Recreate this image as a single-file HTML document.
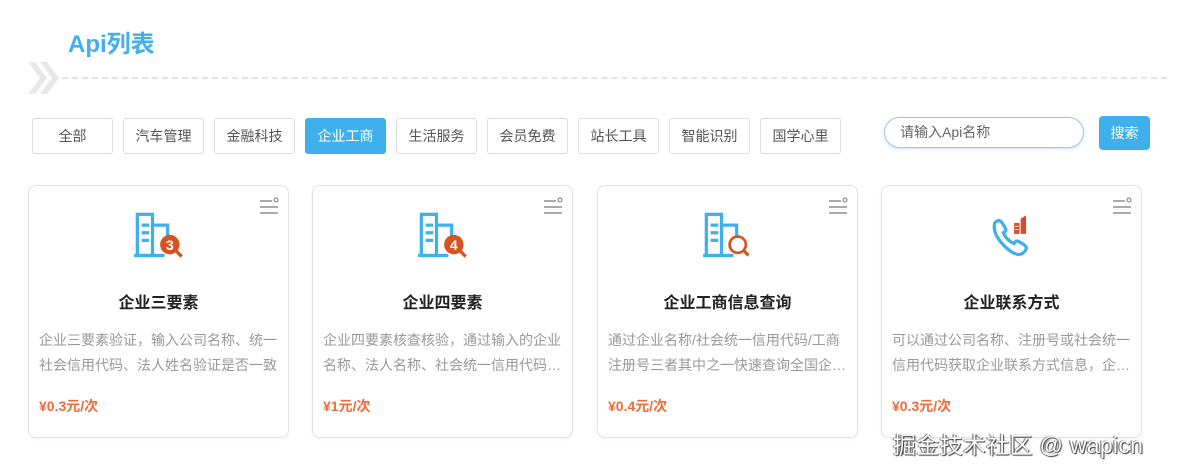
<!DOCTYPE html>
<html><head><meta charset="utf-8"><style>
*{margin:0;padding:0;box-sizing:border-box}
body{width:1180px;height:474px;background:#fff;font-family:"Liberation Sans","Noto Sans CJK SC",sans-serif;position:relative;overflow:hidden}
.title{position:absolute;left:68px;top:24px;font-size:24px;font-weight:bold;color:#3fb0ec}
.dash{position:absolute;left:62px;top:77px;width:1105px;border-top:2px dashed #e4e4e4}
.chev{position:absolute;left:26px;top:60px}
.tab{position:absolute;top:118px;width:81px;height:36px;border:1px solid #ddd;border-radius:3px;font-size:14px;color:#555;text-align:center;line-height:34px}
.tab.on{background:#3fb0ec;border-color:#3fb0ec;color:#fff}
.inp{position:absolute;left:884px;top:117px;width:200px;height:31px;border:1px solid #9cc8e8;border-radius:16px;font-size:14px;color:#666;padding-left:15px;line-height:29px;box-shadow:0 1px 3px rgba(100,160,220,.3)}
.btn{position:absolute;left:1099px;top:116px;width:51px;height:34px;background:#3fb0ec;border-radius:4px;color:#fff;font-size:14px;text-align:center;line-height:34px}
.card{position:absolute;top:185px;width:261px;height:253px;border:1px solid #e3e3e3;border-radius:8px;box-shadow:0 1px 4px rgba(0,0,0,.05)}
.card .ic{position:absolute;left:0;right:0;top:26px;text-align:center}
.card h3{position:absolute;top:103px;left:0;right:0;text-align:center;font-size:16px;color:#222;font-weight:bold}
.card p{position:absolute;top:142px;left:10px;width:242px;font-size:14px;color:#999;line-height:25px;height:50px;overflow:hidden}
.card .pr{position:absolute;top:210px;left:10px;font-size:14px;font-weight:bold;color:#f06a3c}
.menu{position:absolute;right:9px;top:11px}
.wm{position:absolute;left:893px;top:426px;font-size:23px;color:#fff;text-shadow:1px 1px 1px #333,-1px 0 1px #555;letter-spacing:0.3px}
</style></head><body>
<div class="title">Api列表</div>
<svg class="chev" width="36" height="36" viewBox="0 0 36 36"><path d="M2 2 L14 18 L2 34 L9 34 L21 18 L9 2Z M14 2 L26 18 L14 34 L21 34 L33 18 L21 2Z" fill="#e8e8e8"/></svg>
<div class="dash"></div>
<div class="tab" style="left:32px">全部</div>
<div class="tab" style="left:123px">汽车管理</div>
<div class="tab" style="left:214px">金融科技</div>
<div class="tab on" style="left:305px">企业工商</div>
<div class="tab" style="left:396px">生活服务</div>
<div class="tab" style="left:487px">会员免费</div>
<div class="tab" style="left:578px">站长工具</div>
<div class="tab" style="left:669px">智能识别</div>
<div class="tab" style="left:760px">国学心里</div>
<div class="inp">请输入Api名称</div>
<div class="btn">搜索</div>

<div class="card" style="left:28px">
<svg class="menu" width="20" height="18"><path d="M1 4h12M1 10h18M1 16h18" stroke="#777" stroke-width="1.2"/><circle cx="17" cy="3" r="2" fill="none" stroke="#777"/></svg>
<div class="ic"><svg width="52" height="48" viewBox="0 0 48 44"><g fill="none" stroke="#3fb0ec" stroke-width="3"><rect x="4" y="2" width="14" height="38"/><path d="M18 12h14v14M1 40h28"/><path d="M8 12h7M8 19h7M8 26h7"/></g><circle cx="34" cy="30" r="9" fill="#d65422"/><text x="34" y="35" font-size="13" font-weight="bold" fill="#fff" text-anchor="middle" font-family="Liberation Sans">3</text><path d="M40 36l5 5" stroke="#d65422" stroke-width="3"/></svg></div>
<h3>企业三要素</h3><p>企业三要素验证，输入公司名称、统一社会信用代码、法人姓名验证是否一致</p><div class="pr">¥0.3元/次</div></div>

<div class="card" style="left:312px">
<svg class="menu" width="20" height="18"><path d="M1 4h12M1 10h18M1 16h18" stroke="#777" stroke-width="1.2"/><circle cx="17" cy="3" r="2" fill="none" stroke="#777"/></svg>
<div class="ic"><svg width="52" height="48" viewBox="0 0 48 44"><g fill="none" stroke="#3fb0ec" stroke-width="3"><rect x="4" y="2" width="14" height="38"/><path d="M18 12h14v14M1 40h28"/><path d="M8 12h7M8 19h7M8 26h7"/></g><circle cx="34" cy="30" r="9" fill="#d65422"/><text x="34" y="35" font-size="13" font-weight="bold" fill="#fff" text-anchor="middle" font-family="Liberation Sans">4</text><path d="M40 36l5 5" stroke="#d65422" stroke-width="3"/></svg></div>
<h3>企业四要素</h3><p>企业四要素核查核验，通过输入的企业名称、法人名称、社会统一信用代码…</p><div class="pr">¥1元/次</div></div>

<div class="card" style="left:597px">
<svg class="menu" width="20" height="18"><path d="M1 4h12M1 10h18M1 16h18" stroke="#777" stroke-width="1.2"/><circle cx="17" cy="3" r="2" fill="none" stroke="#777"/></svg>
<div class="ic"><svg width="52" height="48" viewBox="0 0 48 44"><g fill="none" stroke="#3fb0ec" stroke-width="3"><rect x="4" y="2" width="14" height="38"/><path d="M18 12h14v14M1 40h28"/><path d="M8 12h7M8 19h7M8 26h7"/></g><circle cx="33" cy="30" r="7.5" fill="#fff" stroke="#d65422" stroke-width="2.5"/><path d="M38 35l5 5" stroke="#d65422" stroke-width="3"/></svg></div>
<h3>企业工商信息查询</h3><p>通过企业名称/社会统一信用代码/工商注册号三者其中之一快速查询全国企…</p><div class="pr">¥0.4元/次</div></div>

<div class="card" style="left:881px">
<svg class="menu" width="20" height="18"><path d="M1 4h12M1 10h18M1 16h18" stroke="#777" stroke-width="1.2"/><circle cx="17" cy="3" r="2" fill="none" stroke="#777"/></svg>
<div class="ic"><svg width="52" height="48" viewBox="0 0 48 44"><path d="M8 10c3-3 5-3 7 0l3 5c1 2 0 3-2 4c2 5 5 8 10 10c1-2 2-3 4-2l5 3c3 2 3 4 0 7c-3 3-8 3-15-3c-8-7-14-15-12-24z" fill="none" stroke="#3fb0ec" stroke-width="3"/><path d="M26 10h5v10h-5z M32 6l5-3v17h-5z" fill="#d64a2a"/><path d="M27 13h3M27 16h3" stroke="#fff" stroke-width="1"/></svg></div>
<h3>企业联系方式</h3><p>可以通过公司名称、注册号或社会统一信用代码获取企业联系方式信息，企…</p><div class="pr">¥0.3元/次</div></div>

<div class="wm">掘金技术社区 @ wapicn</div>
</body></html>
